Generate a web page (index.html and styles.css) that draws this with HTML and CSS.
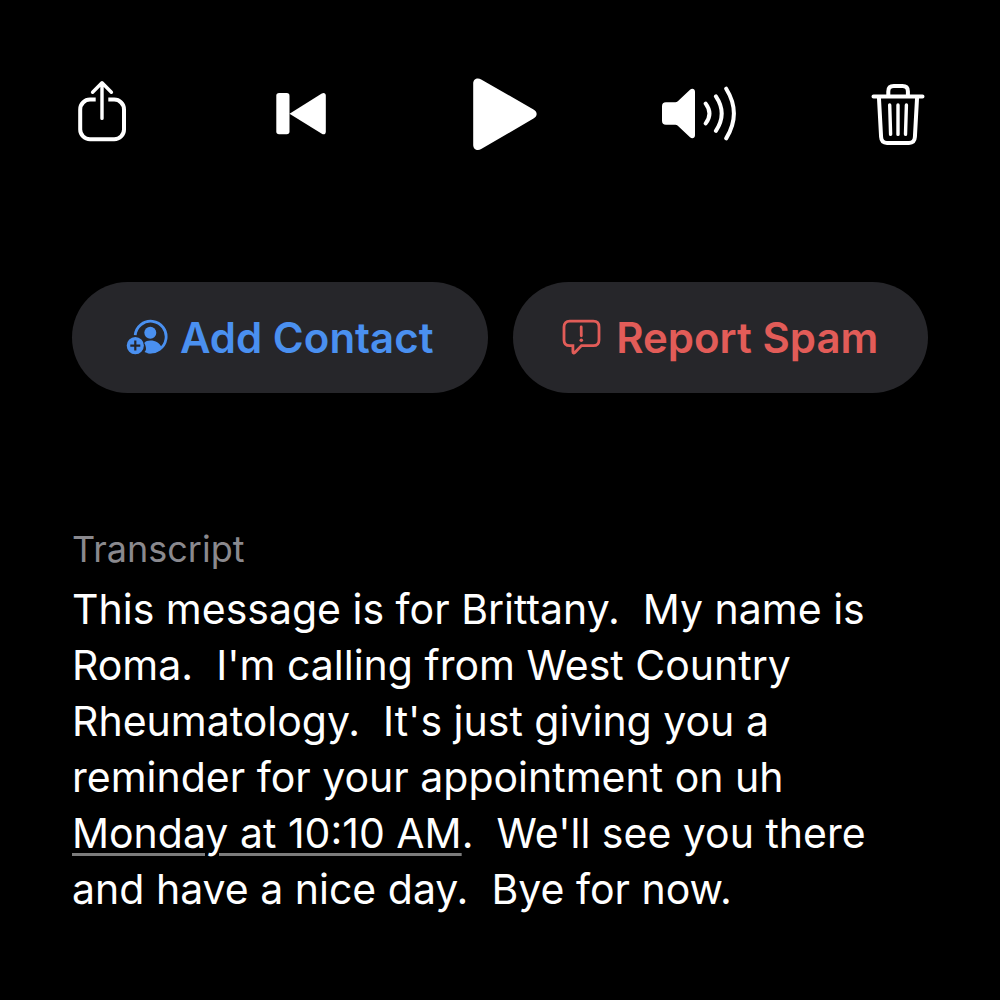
FILE: index.html
```
<!DOCTYPE html>
<html lang="en">
<head>
    <meta charset="UTF-8">
    <meta name="viewport" content="width=device-width, initial-scale=1.0">
    <title>Voicemail</title>
    <link rel="stylesheet" href="styles.css">
</head>
<body>
    <main class="voicemail">
        <div class="player">
            <button class="control" type="button" aria-label="Share">
                <svg viewBox="0 0 80 80" class="line">
                    <path d="M33.7 25.6H28a9.8 9.8 0 0 0-9.8 9.8v20A9.8 9.8 0 0 0 28 65.2h24.2a9.8 9.8 0 0 0 9.8-9.8v-20a9.8 9.8 0 0 0-9.8-9.8h-5.9" stroke-linecap="butt"/>
                    <path d="M40 9v35.4M30.6 18.2L40 8.8l9.4 9.4" stroke-width="3.4"/>
                </svg>
            </button>
            <button class="control" type="button" aria-label="Back to start">
                <svg viewBox="0 0 80 80" class="solid">
                    <rect x="15.3" y="19" width="13.2" height="41.3" rx="2.8"/>
                    <path d="M28.5 39.7L60.8 19.6c2-1.2 4-.4 4 2v36.2c0 2.4-2 3.2-4 2z"/>
                </svg>
            </button>
            <button class="control" type="button" aria-label="Play">
                <svg viewBox="0 0 80 80" class="solid">
                    <path d="M13.2 9.500c0-4.300 4-6.400 8-4.100L73.500 35.500c4.200 2.400 4.200 6.600 0 9L21.200 75.100c-4 2.300-8 .2-8-4.100z"/>
                </svg>
            </button>
            <button class="control" type="button" aria-label="Speaker">
                <svg viewBox="0 0 80 80" class="line">
                    <path class="fill" d="M7 28.3h9.300c1 0 1.800-.3 2.500-1L31 15.800c2-1.800 5-1 5 1.900v43.600c0 2.900-3 3.700-5 1.900L18.800 51.700c-.7-.7-1.500-1-2.500-1H7c-2.700 0-4-1.300-4-4V32.300c0-2.700 1.300-4 4-4z"/>
                    <path d="M46.700 29.600q7.500 9.900 0 19.800M56.900 22.300q11.600 17.200 0 34.600M67.200 14.700q15.400 24.800 0 49.700" stroke-width="4"/>
                </svg>
            </button>
            <button class="control" type="button" aria-label="Delete">
                <svg viewBox="0 0 80 80" class="line">
                    <path d="M15.500 22.600h49M30.300 22v-4.600c0-3.600 1.900-5.300 5.500-5.300h8.600c3.600 0 5.500 1.700 5.500 5.300V22"/>
                    <path d="M20.900 23l2.200 40c.2 3.800 2.200 5.900 5.900 5.900h22c3.700 0 5.700-2.100 5.900-5.900l2.200-40"/>
                    <path d="M31.700 31l.9 29.400M40 31v29.400M48.400 31l-.9 29.400" stroke-width="3.4"/>
                </svg>
            </button>
        </div>

        <div class="actions">
            <button class="action add" type="button">
                <svg viewBox="0 0 42 38">
                    <path d="M9.200 16.200a15.500 15.500 0 1 1 12.500 16.700" fill="none" stroke="currentColor" stroke-width="2.8"/>
                    <circle cx="24.300" cy="13.700" r="6"/>
                    <path d="M20 30c0-2-.6-4.300-1.800-6 1.500-1.600 3.600-2.400 6.300-2.400 5 0 9.200 2.500 11.300 7.200-2.700 3.500-6.700 5.400-11.300 5.400-2.200 0-4.300-.4-6-1.300.9-.9 1.500-1.900 1.500-2.900z"/>
                    <path fill-rule="evenodd" d="M9.300 18a8.600 8.600 0 1 0 0 17.200 8.600 8.600 0 0 0 0-17.200zM8.200 21.600h2.200v3.900h3.900v2.200h-3.900v3.900H8.200v-3.900H4.300v-2.200h3.900z"/>
                </svg>
                Add Contact
            </button>
            <button class="action spam" type="button">
                <svg viewBox="0 0 42 38">
                    <path d="M7.700 2.200h23.600c3.600 0 5.700 2.100 5.700 5.700v13c0 3.600-2.100 5.700-5.700 5.700H19.500l-6.600 6.900c-1 1-2 .6-2-.8v-6.100H7.700c-3.600 0-5.700-2.100-5.700-5.700v-13c0-3.600 2.100-5.700 5.700-5.700z" fill="none" stroke="currentColor" stroke-width="2.800"/>
                    <path d="M19.200 8l.1 8.800" fill="none" stroke="currentColor" stroke-width="2.800" stroke-linecap="round"/>
                    <circle cx="19.300" cy="21.300" r="1.800"/>
                </svg>
                Report Spam
            </button>
        </div>

        <section class="transcript">
            <h2>Transcript</h2>
            <p>This message is for Brittany.&nbsp; My name is Roma.&nbsp; I'm calling from West Country Rheumatology.&nbsp; It's just giving you a reminder for your appointment on uh <a href="#">Monday at 10:10 AM</a>.&nbsp; We'll see you there and have a nice day.&nbsp; Bye for now.</p>
        </section>
    </main>
</body>
</html>
```
FILE: styles.css
```
body {
    margin: 0;
    background-color: #000;
    color: #fff;
    font-family: Inter, "Liberation Sans", sans-serif;
}
button {
    border: none;
    padding: 0;
    font-family: inherit;
    cursor: pointer;
}
.voicemail {
    padding: 74px 72px;
}
.player {
    display: flex;
    justify-content: space-between;
    margin: 0 -10px;
}
.control {
    width: 80px;
    height: 80px;
    background: none;
    color: #fff;
}
.control svg {
    display: block;
}
.line {
    fill: none;
    stroke: currentColor;
    stroke-width: 4;
    stroke-linecap: round;
    stroke-linejoin: round;
}
.solid {
    fill: currentColor;
}
.fill {
    fill: currentColor;
    stroke: none;
}
.actions {
    display: flex;
    gap: 25px;
    margin-top: 128px;
}
.action {
    flex: 1;
    display: flex;
    justify-content: center;
    align-items: center;
    gap: 12px;
    height: 111px;
    border-radius: 56px;
    background-color: #26262a;
    font-size: 42px;
    font-weight: 600;
    white-space: nowrap;
}
.action svg {
    width: 42px;
    height: 38px;
    fill: currentColor;
}
.add {
    color: #4a90f0;
}
.spam {
    color: #e25c58;
}
.transcript {
    margin-top: 132px;
}
.transcript h2 {
    margin: 0;
    color: #8a898e;
    font-size: 36px;
    font-weight: 400;
    line-height: 48px;
}
.transcript p {
    margin: 8px 0 0;
    font-size: 41px;
    line-height: 56px;
}
.transcript a {
    color: inherit;
    text-decoration-color: #7c7c7c;
    text-decoration-thickness: 3px;
    text-underline-offset: 5px;
}
```
